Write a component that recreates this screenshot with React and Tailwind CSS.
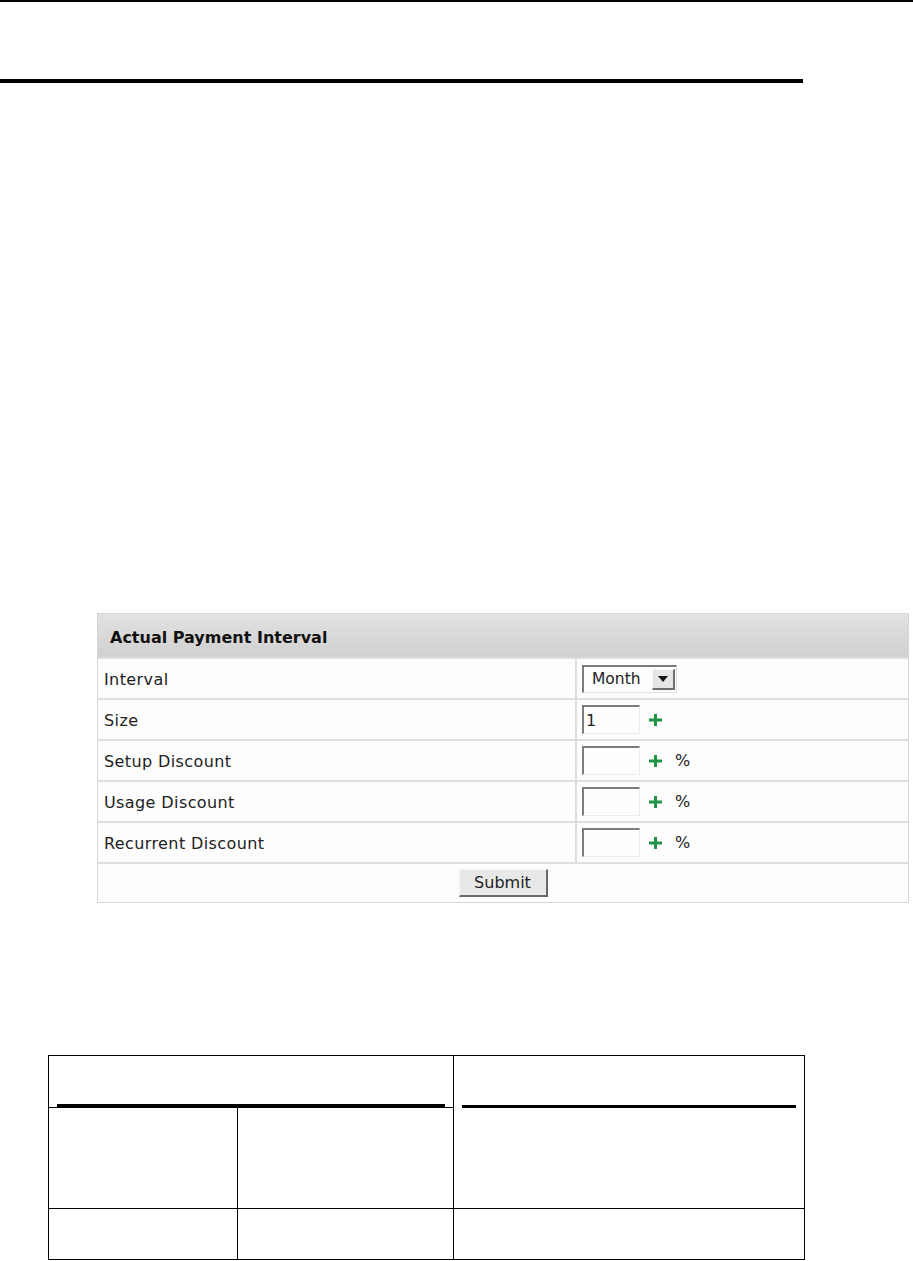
import React from 'react';

const Plus = () => (
    <svg width="13" height="12" viewBox="0 0 13 12" className="shrink-0">
        <rect x="5" y="0" width="3" height="12" fill="#1f9447" />
        <rect x="0" y="4.5" width="13" height="3" fill="#1f9447" />
    </svg>
);

const TextBox = ({ value }) => (
    <div className="w-[58px] h-[29px] border-t-2 border-l-2 border-r border-b border-t-[#7c7c7c] border-l-[#7c7c7c] border-r-[#ececec] border-b-[#ececec] bg-[#fdfdfd] pl-[2px] pt-[2px] flex items-center text-[16px] text-[#222]">
        {value}
    </div>
);

const rows = [
    { label: 'Interval', kind: 'select' },
    { label: 'Size', kind: 'input', value: '1' },
    { label: 'Setup Discount', kind: 'input', pct: true },
    { label: 'Usage Discount', kind: 'input', pct: true },
    { label: 'Recurrent Discount', kind: 'input', pct: true },
];

const App = () => {
    return (
        <div className="w-[913px] h-[1261px] bg-white overflow-hidden font-['DejaVu_Sans','Noto_Sans',sans-serif]">
            {/* page rules */}
            <div className="h-[2px] bg-black" />
            <div className="mt-[77px] h-[4px] w-[803px] bg-black" />

            {/* form */}
            <div className="mt-[530px] ml-[97px] w-[812px] border border-[#d6d6d6] bg-[#fdfdfd] text-[#222]">
                <div className="h-[43px] flex items-center pt-[4px] pl-[12px] bg-linear-to-b from-[#e2e2e2] to-[#d0d0d0] text-[16px] font-bold text-[#111]">
                    Actual Payment Interval
                </div>
                {rows.map((row) => (
                    <div key={row.label} className="h-[41px] flex border-t-2 border-[#dedede]">
                        <div className="w-[479px] shrink-0 border-r-2 border-[#dedede] pl-[6px] pt-[2px] flex items-center text-[16px] tracking-[0.4px]">
                            {row.label}
                        </div>
                        <div className="flex-1 flex items-center pl-[5px]">
                            {row.kind === 'select' ? (
                                <div className="w-[95px] h-[28px] border-t-2 border-l-2 border-r border-b border-t-[#7c7c7c] border-l-[#7c7c7c] border-r-[#e2e2e2] border-b-[#e2e2e2] bg-[#fdfdfd] flex items-center justify-between pl-[8px] pr-[1px]">
                                    <span className="text-[15.5px] pt-[2px]">Month</span>
                                    <span className="w-[23px] h-[21px] bg-[#e6e6e6] border-t border-l border-r-2 border-b-2 border-t-[#f8f8f8] border-l-[#f8f8f8] border-r-[#6e6e6e] border-b-[#6e6e6e] flex items-center justify-center">
                                        <svg width="10" height="6" viewBox="0 0 10 6">
                                            <path d="M0 0 H10 L5 6 Z" fill="#111" />
                                        </svg>
                                    </span>
                                </div>
                            ) : (
                                <>
                                    <TextBox value={row.value} />
                                    <span className="ml-[9px]"><Plus /></span>
                                    {row.pct && <span className="ml-[13px] text-[16px]">%</span>}
                                </>
                            )}
                        </div>
                    </div>
                ))}
                <div className="h-[40px] flex items-center justify-center border-t-2 border-[#dedede]">
                    <button className="w-[89px] h-[28px] bg-[#e8e8e8] border-t border-l border-r-2 border-b-2 border-t-[#f6f6f6] border-l-[#f6f6f6] border-r-[#6a6a6a] border-b-[#6a6a6a] text-[16px] text-[#222] flex items-center justify-center">
                        Submit
                    </button>
                </div>
            </div>

            {/* blank document table */}
            <table className="mt-[152px] ml-[48px] border-collapse">
                <tbody>
                    <tr>
                        <td colSpan={2} className="w-[405px] h-[52px] border border-black p-0 align-bottom">
                            <div className="px-[8px]">
                                <div className="h-[3px] bg-black" />
                            </div>
                        </td>
                        <td rowSpan={2} className="w-[351px] border border-black p-0 align-top">
                            <div className="pt-[49px] px-[8px]">
                                <div className="h-[3px] bg-black" />
                            </div>
                        </td>
                    </tr>
                    <tr>
                        <td className="w-[189px] h-[101px] border border-black p-0" />
                        <td className="w-[216px] h-[101px] border border-black p-0" />
                    </tr>
                    <tr>
                        <td className="h-[51px] border border-black p-0" />
                        <td className="h-[51px] border border-black p-0" />
                        <td className="h-[51px] border border-black p-0" />
                    </tr>
                </tbody>
            </table>
        </div>
    );
};

export default App;
